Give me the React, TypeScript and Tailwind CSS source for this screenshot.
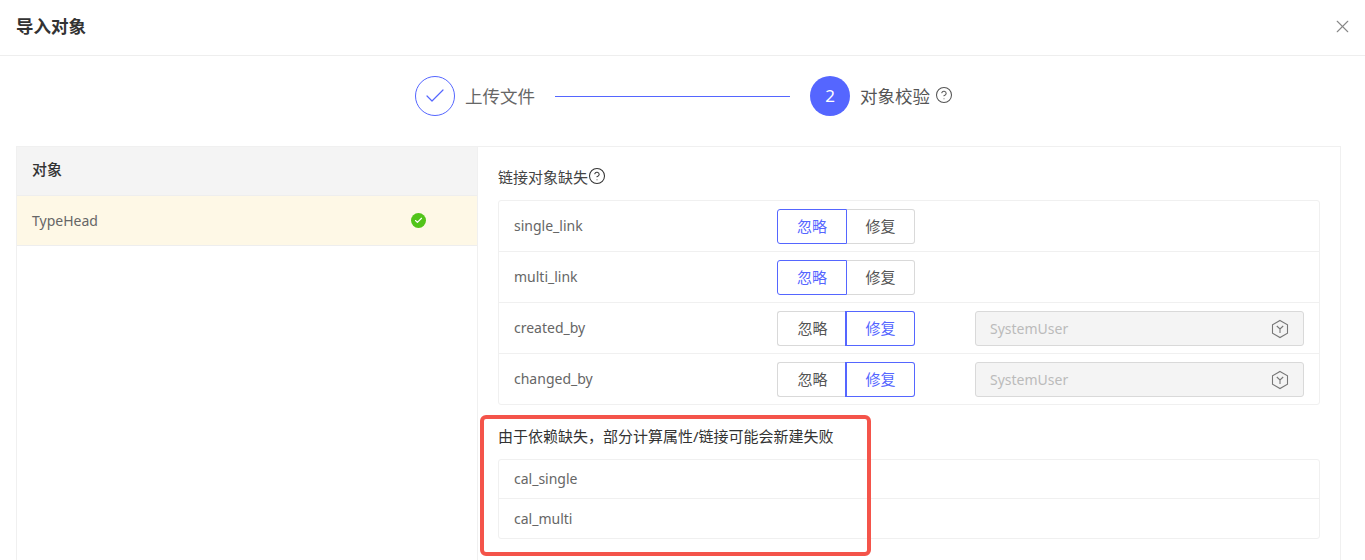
import { Check, CircleHelp, X } from "lucide-react";

const font = { fontFamily: '"Noto Sans", "Noto Sans CJK SC", sans-serif' };

function ObjectIcon() {
  return (
    <svg width="20" height="20" viewBox="0 0 20 20" fill="none" stroke="#777" strokeWidth="1.1">
      <path d="M10 1.5 17.5 5.7V14.3L10 18.5 2.5 14.3V5.7Z" />
      <path d="M6.8 7 10 10l3.2-3M10 10v4" />
    </svg>
  );
}

function Toggle({ active }: { active: "ignore" | "fix" }) {
  return (
    <div className="flex w-[138px] h-[35px] text-[15px]">
      <div
        className={
          active === "ignore"
            ? "relative z-10 w-[70px] flex items-center justify-center border border-[#5566ff] rounded-l-[3px] text-[#5566ff] bg-white"
            : "w-[68px] pl-[2px] flex items-center justify-center border border-r-0 border-[#d9d9d9] rounded-l-[3px] text-[#555]"
        }
      >
        忽略
      </div>
      <div
        className={
          active === "fix"
            ? "relative z-10 w-[70px] flex items-center justify-center border border-l-2 border-[#5566ff] rounded-r-[3px] text-[#5566ff] bg-white"
            : "w-[68px] flex items-center justify-center border border-l-0 border-[#d9d9d9] rounded-r-[3px] text-[#555]"
        }
      >
        修复
      </div>
    </div>
  );
}

function LinkRow({ name, active, last }: { name: string; active: "ignore" | "fix"; last?: boolean }) {
  return (
    <div className={last ? "flex items-start pt-2 h-[50px] pl-[15px]" : "flex items-start pt-2 h-[51px] pl-[15px] border-b border-[#f0f0f0]"}>
      <div className="w-[263px] h-[33px] flex items-center text-sm text-[#666]">{name}</div>
      <Toggle active={active} />
      {active === "fix" && (
        <div className="ml-[60px] w-[329px] h-[35px] flex items-center justify-between pl-[14px] pr-[13px] bg-[#f4f4f4] border border-[#d9d9d9] rounded-[3px] text-sm text-[#bbb]">
          SystemUser
          <ObjectIcon />
        </div>
      )}
    </div>
  );
}

export default function App() {
  const links: { name: string; active: "ignore" | "fix" }[] = [
    { name: "single_link", active: "ignore" },
    { name: "multi_link", active: "ignore" },
    { name: "created_by", active: "fix" },
    { name: "changed_by", active: "fix" },
  ];

  return (
    <div className="relative h-[560px] overflow-hidden bg-white text-[#333]" style={font}>
      <div className="flex items-center justify-between h-[56px] pl-4 pr-[12px] pb-[2px] border-b border-[#eee]">
        <h1 className="text-[17.5px] font-bold text-[#333]">导入对象</h1>
        <X className="w-[21px] h-[21px] text-[#888]" strokeWidth={1.3} />
      </div>

      <div className="flex items-center h-[80px] mb-[10px] pl-[415px]">
        <div className="flex items-center justify-center w-10 h-10 rounded-full border border-[#5566ff]">
          <Check className="w-6 h-6 text-[#5566ff]" strokeWidth={1.2} />
        </div>
        <span className="ml-[10px] text-[17.5px] text-[#666]">上传文件</span>
        <div className="ml-[20px] w-[235px] h-px bg-[#5566ff]" />
        <div className="ml-[20px] flex items-center justify-center w-10 h-10 rounded-full bg-[#5566ff] text-white text-[17px]">2</div>
        <span className="ml-[10px] text-[17.5px] text-[#555]">对象校验</span>
        <CircleHelp className="ml-[5px] mb-[2px] w-[18px] h-[18px] text-[#555]" strokeWidth={1.4} />
      </div>

      <div className="flex mx-4 w-[1325px] h-[500px] border border-[#f0f0f0]">
        <div className="w-[461px] shrink-0 border-r border-[#f0f0f0]">
          <div className="flex items-center h-[49px] pl-[15px] pb-[3px] bg-[#f4f4f4] border-b border-[#eee] text-[15px] font-medium text-[#333]">对象</div>
          <div className="flex items-center justify-between h-[50px] pl-[15px] pr-[51px] bg-[#fef8e6] border-b border-[#eee] text-sm text-[#666]">
            TypeHead
            <span className="flex items-center justify-center w-[15px] h-[15px] rounded-full bg-[#52c41a]">
              <Check className="w-[9px] h-[9px] text-white" strokeWidth={3} />
            </span>
          </div>
        </div>

        <div className="flex-1 pl-5 pr-5 pt-[20px]">
          <div className="flex items-center h-[20px] text-[15px] text-[#444]">
            链接对象缺失
            <CircleHelp className="w-[18px] h-[18px] mb-[3px] text-[#333]" strokeWidth={1.4} />
          </div>
          <div className="mt-[13px] w-[822px] h-[205px] border border-[#f0f0f0] rounded-[3px]">
            {links.map((l, i) => (
              <LinkRow key={l.name} name={l.name} active={l.active} last={i === links.length - 1} />
            ))}
          </div>

          <div className="mt-[21px] h-[20px] flex items-center text-[15px] text-[#333]">由于依赖缺失，部分计算属性/链接可能会新建失败</div>
          <div className="mt-[13px] w-[822px] h-[80px] border border-[#f0f0f0] rounded-[3px] text-sm text-[#666]">
            <div className="flex items-center h-[39px] pl-[15px] border-b border-[#f0f0f0]">cal_single</div>
            <div className="flex items-center h-[39px] pl-[15px]">cal_multi</div>
          </div>
        </div>
      </div>

      <div className="absolute left-[480px] top-[415px] w-[391px] h-[141px] border-4 border-[#f4544a] rounded-[6px] pointer-events-none" />
    </div>
  );
}
